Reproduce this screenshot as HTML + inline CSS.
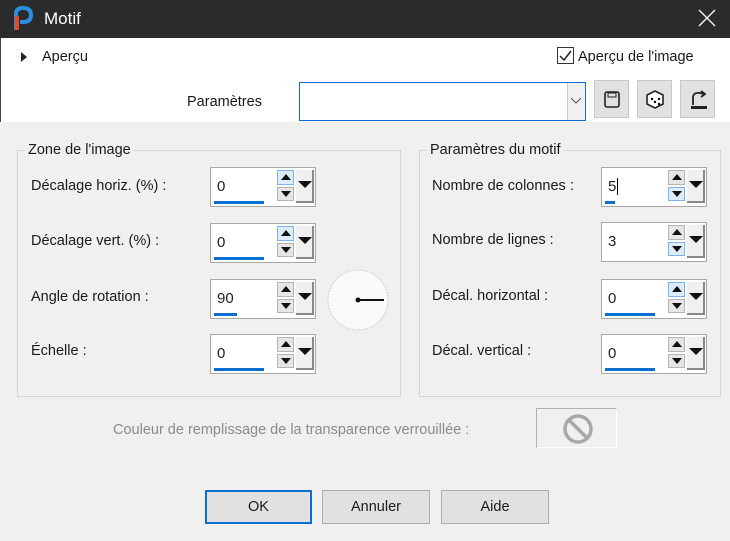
<!DOCTYPE html>
<html><head><meta charset="utf-8">
<style>
*{box-sizing:border-box;margin:0;padding:0}
body{width:730px;height:541px;overflow:hidden;background:#f0f0f0;font-family:"Liberation Sans",sans-serif;font-size:14.5px;color:#1a1a1a;position:relative}
.a{position:absolute}
.title{left:0;top:0;width:730px;height:38px;background:#2b2b2b;color:#fff}
.white{left:0;top:38px;width:730px;height:84px;background:#fff;border-left:1px solid #444}
.grp{border:1px solid #d6d6d6}
.legend{background:#f0f0f0;padding:0 3px;font-size:14.5px}
.sp{position:absolute;width:106px;height:40px;border:1px solid #a8a8a8;background:#fff}
.sp .v{position:absolute;left:6px;top:10px;font-size:15px;color:#222}
.sp .bar{position:absolute;left:3px;top:33px;height:3px;background:#0a6fd1}
.sp .up,.sp .dn{position:absolute;left:66px;width:17px;height:15px;background:#e6e6e6;border:1px solid #b5b5b5}
.sp .up{top:2px}.sp .dn{top:19px;height:14px}
.sp .up.h,.sp .dn.h{background:#dcecfc;border-color:#7eb4ea}
.sp .up:after{content:"";position:absolute;left:3px;top:3px;border-left:5px solid transparent;border-right:5px solid transparent;border-bottom:6px solid #111}
.sp .dn:after{content:"";position:absolute;left:3px;top:3px;border-left:5px solid transparent;border-right:5px solid transparent;border-top:6px solid #111}
.sp .dd{position:absolute;left:85px;top:2px;width:18px;height:33px;background:#f0f0f0;border-right:2px solid #888;border-bottom:2px solid #888}
.sp .dd:after{content:"";position:absolute;left:2px;top:11px;border-left:7px solid transparent;border-right:7px solid transparent;border-top:7px solid #111}
.lbl{position:absolute;font-size:14.5px}
.btn{position:absolute;top:490px;height:34px;background:#e1e1e1;border:1px solid #adadad;text-align:center;line-height:32px;font-size:14.5px}
.ib{position:absolute;top:80px;width:35px;height:38px;background:#e1e1e1;border:1px solid #c8c8c8}
</style></head><body>
<div class="a title">
  <svg class="a" style="left:12px;top:6px" width="22" height="26" viewBox="0 0 22 26">
    <path d="M4 24 L4 8 Q4 2 11 2 Q19 2 19 9 Q19 16 11 16 L8 16" fill="none" stroke="#2a8fe0" stroke-width="4"/>
    <path d="M5 24 L5 10" stroke="#e8472a" stroke-width="4"/>
  </svg>
  <div class="a" style="left:44px;top:9px;font-size:17px;color:#fff">Motif</div>
  <svg class="a" style="left:698px;top:9px" width="18" height="18"><path d="M1 1 L17 17 M17 1 L1 17" stroke="#fff" stroke-width="1.3"/></svg>
</div>
<div class="a white"></div>
<div class="a" style="left:21px;top:52px;width:0;height:0;border-top:5px solid transparent;border-bottom:5px solid transparent;border-left:6px solid #222"></div>
<div class="a" style="left:42px;top:49px">Aperçu</div>
<div class="a" style="left:557px;top:47px;width:17px;height:17px;border:1px solid #333;background:#fff">
  <svg width="15" height="15" viewBox="0 0 15 15" style="position:absolute;left:0;top:0"><path d="M2 8 L6 12 L13 3" fill="none" stroke="#222" stroke-width="1.5"/></svg>
</div>
<div class="a" style="left:578px;top:49px">Aperçu de l'image</div>
<div class="a" style="left:187px;top:94px">Paramètres</div>
<div class="a" style="left:299px;top:82px;width:287px;height:39px;border:1px solid #0a6fd1;background:#fff">
  <div class="a" style="right:0;top:0;width:18px;height:37px;background:#f0f0f0;border-left:1px solid #ccc"></div>
  <svg class="a" style="right:4px;top:15px" width="10" height="7"><path d="M0 0 L5 5 L10 0" fill="none" stroke="#555"/></svg>
</div>
<div class="ib" style="left:594px"><svg width="35" height="38"><rect x="10" y="11" width="14" height="15" rx="2" fill="none" stroke="#222" stroke-width="1.6"/><rect x="13" y="12" width="8" height="4" fill="none" stroke="#222"/></svg></div>
<div class="ib" style="left:637px"><svg width="35" height="38"><path d="M17 10 L25 14 L25 23 L17 27 L9 23 L9 14 Z" fill="#fff" stroke="#222" stroke-width="1.6"/><circle cx="14" cy="18" r="1.2"/><circle cx="17" cy="21" r="1.2"/><circle cx="21" cy="18" r="1.2"/><circle cx="21" cy="23" r="1.2"/></svg></div>
<div class="ib" style="left:680px"><svg width="36" height="38"><path d="M12 24 L12 17 Q12 11 19 12 L23 13 M20 10 L24 13 L20 16" fill="none" stroke="#222" stroke-width="1.8"/><rect x="10" y="25" width="16" height="3" fill="#222"/></svg></div>

<div class="a grp" style="left:17px;top:150px;width:384px;height:247px"></div>
<div class="a legend" style="left:25px;top:142px">Zone de l'image</div>
<div class="a grp" style="left:419px;top:150px;width:302px;height:247px"></div>
<div class="a legend" style="left:427px;top:142px">Paramètres du motif</div>

<div class="lbl" style="left:31px;top:178px">Décalage horiz. (%) :</div>
<div class="sp" style="left:210px;top:167px"><span class="v">0</span><div class="bar" style="width:50px"></div><div class="up h"></div><div class="dn"></div><div class="dd"></div></div>
<div class="lbl" style="left:31px;top:233px">Décalage vert. (%) :</div>
<div class="sp" style="left:210px;top:223px"><span class="v">0</span><div class="bar" style="width:50px"></div><div class="up h"></div><div class="dn"></div><div class="dd"></div></div>
<div class="lbl" style="left:31px;top:289px">Angle de rotation :</div>
<div class="sp" style="left:210px;top:279px"><span class="v">90</span><div class="bar" style="width:23px"></div><div class="up"></div><div class="dn"></div><div class="dd"></div></div>
<div class="lbl" style="left:31px;top:343px">Échelle :</div>
<div class="sp" style="left:210px;top:334px"><span class="v">0</span><div class="bar" style="width:50px"></div><div class="up"></div><div class="dn"></div><div class="dd"></div></div>
<svg class="a" style="left:327px;top:269px" width="62" height="62"><circle cx="31" cy="31" r="30" fill="#fafafa" stroke="#d0d0d0" stroke-dasharray="2 1"/><line x1="31" y1="31" x2="57" y2="31" stroke="#111" stroke-width="2"/><circle cx="31" cy="31" r="2.5" fill="#111"/></svg>

<div class="lbl" style="left:432px;top:178px">Nombre de colonnes :</div>
<div class="sp" style="left:601px;top:167px"><span class="v">5<span style="border-left:1px solid #000;margin-left:1px"></span></span><div class="bar" style="width:10px"></div><div class="up"></div><div class="dn h"></div><div class="dd"></div></div>
<div class="lbl" style="left:432px;top:232px">Nombre de lignes :</div>
<div class="sp" style="left:601px;top:222px"><span class="v">3</span><div class="up"></div><div class="dn h"></div><div class="dd"></div></div>
<div class="lbl" style="left:432px;top:288px">Décal. horizontal :</div>
<div class="sp" style="left:601px;top:279px"><span class="v">0</span><div class="bar" style="width:50px"></div><div class="up h"></div><div class="dn"></div><div class="dd"></div></div>
<div class="lbl" style="left:432px;top:343px">Décal. vertical :</div>
<div class="sp" style="left:601px;top:334px"><span class="v">0</span><div class="bar" style="width:50px"></div><div class="up"></div><div class="dn"></div><div class="dd"></div></div>

<div class="lbl" style="left:113px;top:422px;color:#8a8a8a">Couleur de remplissage de la transparence verrouillée :</div>
<div class="a" style="left:536px;top:408px;width:81px;height:40px;border:1px solid #b0b0b0;border-right-color:#fff;border-bottom-color:#fff">
  <svg width="80" height="38"><circle cx="41" cy="20" r="13" fill="none" stroke="#a8a8a8" stroke-width="3.5"/><line x1="32" y1="11" x2="50" y2="29" stroke="#a8a8a8" stroke-width="3.5"/></svg>
</div>

<div class="btn" style="left:205px;width:107px;border:2px solid #0a6fd1;line-height:30px">OK</div>
<div class="btn" style="left:322px;width:108px">Annuler</div>
<div class="btn" style="left:441px;width:108px">Aide</div>
</body></html>
